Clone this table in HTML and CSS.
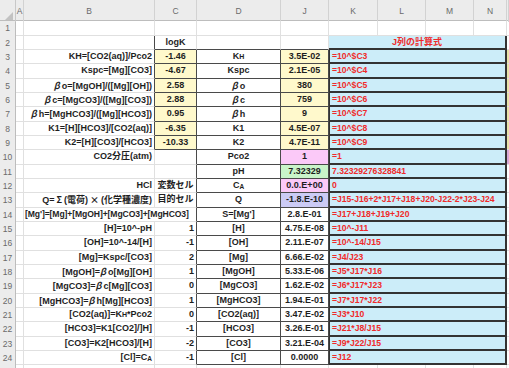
FILE: index.html
```html
<!DOCTYPE html>
<html lang="ja">
<head>
<meta charset="utf-8">
<title>Sheet</title>
<link rel="stylesheet" href="styles.css">
</head>
<body>
<div class="sheet">
  <div class="row hdr">
    <div class="h corner"><span class="tri"></span></div>
    <div class="h">A</div><div class="h">B</div><div class="h">C</div><div class="h">D</div>
    <div class="h">J</div><div class="h">K</div><div class="h">L</div><div class="h">M</div><div class="h">N</div><div class="h"></div>
  </div>

  <div class="row">
    <div class="rh">1</div><div class="c"></div><div class="c"></div><div class="c"></div><div class="c"></div>
    <div class="c"></div><div class="c"></div><div class="c"></div><div class="c"></div><div class="c"></div><div class="c"></div>
  </div>
  <div class="row">
    <div class="rh">2</div><div class="c"></div><div class="c rb"></div><div class="c ctr bb">logK</div><div class="c bb"></div>
    <div class="c bb"></div><div class="c kh">J列の計算式</div><div class="c"></div>
  </div>
  <div class="row">
    <div class="rh">3</div><div class="c"></div><div class="c r rb">KH=[CO2(aq)]/Pco2</div><div class="c ctr y rb bb">-1.46</div><div class="c ctr rb bb">K<span class="sm">H</span></div>
    <div class="c ctr y rb bb">3.5E-02</div><div class="c k">=10^$C3</div><div class="c o y"></div>
  </div>
  <div class="row">
    <div class="rh">4</div><div class="c"></div><div class="c r rb">Kspc=[Mg][CO3]</div><div class="c ctr y rb bb">-4.67</div><div class="c ctr rb bb">Kspc</div>
    <div class="c ctr y rb bb">2.1E-05</div><div class="c k">=10^$C4</div><div class="c o y"></div>
  </div>
  <div class="row">
    <div class="rh">5</div><div class="c"></div><div class="c r rb"><i class="gk">β</i>o=[MgOH]/([Mg][OH])</div><div class="c ctr y rb bb">2.58</div><div class="c ctr rb bb"><i class="gk">β</i>o</div>
    <div class="c ctr y rb bb">380</div><div class="c k">=10^$C5</div><div class="c o y"></div>
  </div>
  <div class="row">
    <div class="rh">6</div><div class="c"></div><div class="c r rb"><i class="gk">β</i>c=[MgCO3]/([Mg][CO3])</div><div class="c ctr y rb bb">2.88</div><div class="c ctr rb bb"><i class="gk">β</i>c</div>
    <div class="c ctr y rb bb">759</div><div class="c k">=10^$C6</div><div class="c o y"></div>
  </div>
  <div class="row">
    <div class="rh">7</div><div class="c"></div><div class="c r rb"><i class="gk">β</i>h=[MgHCO3]/([Mg][HCO3])</div><div class="c ctr y rb bb">0.95</div><div class="c ctr rb bb"><i class="gk">β</i>h</div>
    <div class="c ctr y rb bb">9</div><div class="c k">=10^$C7</div><div class="c o y"></div>
  </div>
  <div class="row">
    <div class="rh">8</div><div class="c"></div><div class="c r rb">K1=[H][HCO3]/[CO2(aq)]</div><div class="c ctr y rb bb">-6.35</div><div class="c ctr rb bb">K1</div>
    <div class="c ctr y rb bb">4.5E-07</div><div class="c k">=10^$C8</div><div class="c o y"></div>
  </div>
  <div class="row">
    <div class="rh">9</div><div class="c"></div><div class="c r rb">K2=[H][CO3]/[HCO3]</div><div class="c ctr y rb bb">-10.33</div><div class="c ctr rb bb">K2</div>
    <div class="c ctr y rb bb">4.7E-11</div><div class="c k">=10^$C9</div><div class="c o y"></div>
  </div>
  <div class="row">
    <div class="rh">10</div><div class="c"></div><div class="c r">CO2分圧(atm)</div><div class="c rb"></div><div class="c ctr rb bb">Pco2</div>
    <div class="c ctr pk rb bb">1</div><div class="c k">=1</div><div class="c o pk"></div>
  </div>
  <div class="row">
    <div class="rh">11</div><div class="c"></div><div class="c"></div><div class="c rb"></div><div class="c ctr rb bb">pH</div>
    <div class="c ctr gr rb bb">7.32329</div><div class="c k">7.32329276328841</div><div class="c o"></div>
  </div>
  <div class="row">
    <div class="rh">12</div><div class="c"></div><div class="c r">HCl</div><div class="c ctr rb">変数セル</div><div class="c ctr rb bb">C<sub>A</sub></div>
    <div class="c ctr pk rb bb">0.0.E+00</div><div class="c k">0</div><div class="c o"></div>
  </div>
  <div class="row">
    <div class="rh">13</div><div class="c"></div><div class="c r">Q=<span class="wide">Σ</span>(電荷)<span class="wide">×</span>(化学種濃度)</div><div class="c ctr rb">目的セル</div><div class="c ctr rb bb">Q</div>
    <div class="c ctr lv rb bb">-1.8.E-10</div><div class="c k">=J15-J16+2*J17+J18+J20-J22-2*J23-J24</div><div class="c o"></div>
  </div>
  <div class="row">
    <div class="rh">14</div><div class="c"></div><div class="c span2 rb">[Mg']=[Mg]+[MgOH]+[MgCO3]+[MgHCO3]</div><div class="c ctr rb bb">S=[Mg']</div>
    <div class="c ctr rb bb">2.8.E-01</div><div class="c k">=J17+J18+J19+J20</div><div class="c o"></div>
  </div>
  <div class="row">
    <div class="rh">15</div><div class="c"></div><div class="c r">[H]=10^-pH</div><div class="c r rb">1</div><div class="c ctr rb bb">[H]</div>
    <div class="c ctr rb bb">4.75.E-08</div><div class="c k">=10^-J11</div><div class="c o"></div>
  </div>
  <div class="row">
    <div class="rh">16</div><div class="c"></div><div class="c r">[OH]=10^-14/[H]</div><div class="c r rb">-1</div><div class="c ctr rb bb">[OH]</div>
    <div class="c ctr rb bb">2.11.E-07</div><div class="c k">=10^-14/J15</div><div class="c o"></div>
  </div>
  <div class="row">
    <div class="rh">17</div><div class="c"></div><div class="c r">[Mg]=Kspc/[CO3]</div><div class="c r rb">2</div><div class="c ctr rb bb">[Mg]</div>
    <div class="c ctr rb bb">6.66.E-02</div><div class="c k">=J4/J23</div><div class="c o"></div>
  </div>
  <div class="row">
    <div class="rh">18</div><div class="c"></div><div class="c r">[MgOH]=<i class="gk">β</i>o[Mg][OH]</div><div class="c r rb">1</div><div class="c ctr rb bb">[MgOH]</div>
    <div class="c ctr rb bb">5.33.E-06</div><div class="c k">=J5*J17*J16</div><div class="c o"></div>
  </div>
  <div class="row">
    <div class="rh">19</div><div class="c"></div><div class="c r">[MgCO3]=<i class="gk">β</i>c[Mg][CO3]</div><div class="c r rb">0</div><div class="c ctr rb bb">[MgCO3]</div>
    <div class="c ctr rb bb">1.62.E-02</div><div class="c k">=J6*J17*J23</div><div class="c o"></div>
  </div>
  <div class="row">
    <div class="rh">20</div><div class="c"></div><div class="c r">[MgHCO3]=<i class="gk">β</i>h[Mg][HCO3]</div><div class="c r rb">1</div><div class="c ctr rb bb">[MgHCO3]</div>
    <div class="c ctr rb bb">1.94.E-01</div><div class="c k">=J7*J17*J22</div><div class="c o"></div>
  </div>
  <div class="row">
    <div class="rh">21</div><div class="c"></div><div class="c r">[CO2(aq)]=K<span class="sm">H</span>*Pco2</div><div class="c r rb">0</div><div class="c ctr rb bb">[CO2(aq)]</div>
    <div class="c ctr rb bb">3.47.E-02</div><div class="c k">=J3*J10</div><div class="c o"></div>
  </div>
  <div class="row">
    <div class="rh">22</div><div class="c"></div><div class="c r">[HCO3]=K1[CO2]/]H]</div><div class="c r rb">-1</div><div class="c ctr rb bb">[HCO3]</div>
    <div class="c ctr rb bb">3.26.E-01</div><div class="c k">=J21*J8/J15</div><div class="c o"></div>
  </div>
  <div class="row">
    <div class="rh">23</div><div class="c"></div><div class="c r">[CO3]=K2[HCO3]/[H]</div><div class="c r rb">-2</div><div class="c ctr rb bb">[CO3]</div>
    <div class="c ctr rb bb">3.21.E-04</div><div class="c k">=J9*J22/J15</div><div class="c o"></div>
  </div>
  <div class="row">
    <div class="rh">24</div><div class="c"></div><div class="c r">[Cl]=C<sub>A</sub></div><div class="c r rb">-1</div><div class="c ctr rb bb">[Cl]</div>
    <div class="c ctr rb bb">0.0000</div><div class="c k">=J12</div><div class="c o"></div>
  </div>
  <div class="row">
    <div class="rh"></div><div class="c"></div><div class="c"></div><div class="c"></div><div class="c"></div>
    <div class="c"></div><div class="c"></div><div class="c"></div><div class="c"></div><div class="c"></div><div class="c"></div>
  </div>
</div>
</body>
</html>
```
FILE: styles.css
```css
html, body {
  margin: 0;
  padding: 0;
  background: #ffffff;
}
body {
  font-family: "Liberation Sans", "Noto Sans CJK JP", sans-serif;
  font-size: 9px;
  font-weight: 700;
  color: #1e1e1e;
  overflow: hidden;
  width: 509px;
  height: 368px;
}
.sheet {
  width: 509px;
}
.row {
  display: grid;
  grid-template-columns: 16px 8px 131px 42px 84px 48px 49px 48px 48px 33px 2px;
  height: 14.33px;
}
.row.hdr {
  height: 21.4px;
  background: #ececec;
  border-bottom: 1px solid #bdbdbd;
  box-sizing: border-box;
}
.h {
  font-weight: 400;
  color: #6a6a6a;
  font-size: 8.5px;
  text-align: center;
  line-height: 22px;
  border-right: 1px solid #d2d2d2;
  box-sizing: border-box;
}
.corner {
  position: relative;
  border-right: 1px solid #c8c8c8;
}
.tri {
  position: absolute;
  right: 2px;
  bottom: 2px;
  width: 0;
  height: 0;
  border-left: 8px solid transparent;
  border-bottom: 8px solid #c2c2c2;
}
.rh {
  background: #ececec;
  color: #6a6a6a;
  font-weight: 400;
  font-size: 8.5px;
  text-align: center;
  line-height: 14.33px;
  border-right: 1px solid #bdbdbd;
  box-sizing: border-box;
}
.c {
  box-sizing: border-box;
  border-right: 1px solid #e0e0e0;
  border-bottom: 1px solid #e0e0e0;
  line-height: 13.5px;
  white-space: nowrap;
  overflow: hidden;
  padding: 0 2px;
  min-width: 0;
}
.r { text-align: right; }
.ctr { text-align: center; }
.rb { border-right-color: #4a4a4a; }
.bb { border-bottom-color: #4a4a4a; }
.y { background: #fff9cc; }
.pk { background: #fbc9f8; }
.gr { background: #c9f4c9; }
.lv { background: #cccbf5; }
.span2 {
  grid-column: span 2;
  font-size: 8.6px;
  padding-left: 1px;
  letter-spacing: -0.1px;
}
.kh {
  grid-column: span 4;
  background: #ccedf9;
  color: #f02a2a;
  text-align: center;
  border-bottom: 2px solid #333333;
  border-right: 2px solid #333333;
  line-height: 13px;
}
.k {
  grid-column: span 4;
  background: #ccedf9;
  color: #f02a2a;
  border-left: 1px solid #333333;
  border-right: 2px solid #333333;
  border-bottom: 2px solid #333333;
  line-height: 12.5px;
  padding-left: 2px;
  font-size: 8.6px;
}
.o {
  padding: 0;
  border-right: none;
}
.o.y { background: #e9e2a8; }
.o.pk { background: #d9a8d6; }
.gk {
  font-style: italic;
  font-family: "Noto Sans CJK JP", sans-serif;
  font-weight: 700;
  margin-right: 2px;
}
.wide {
  font-family: "Noto Sans CJK JP", sans-serif;
  margin: 0 2px;
}
.sm {
  font-size: 7px;
}
sub {
  font-size: 6.5px;
  vertical-align: -1px;
  line-height: 0;
}
```
